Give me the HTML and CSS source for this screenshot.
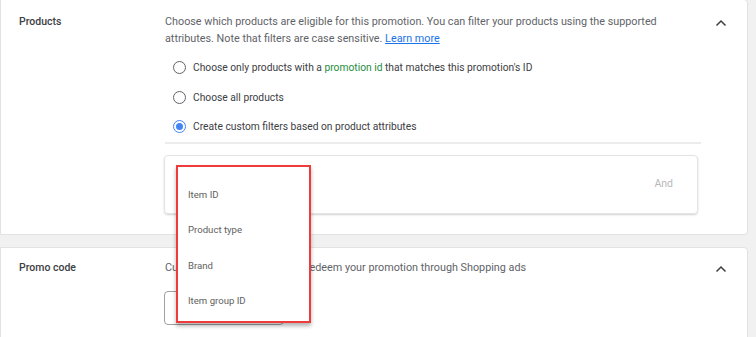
FILE: index.html
```html
<!DOCTYPE html>
<html>
<head>
<meta charset="utf-8">
<link rel="stylesheet" href="styles.css">
</head>
<body>
<div class="page">
  <section class="card card-products">
    <div class="label">Products</div>
    <div class="content">
      <p class="desc">Choose which products are eligible for this promotion. You can filter your products using the supported attributes. Note that filters are case sensitive. <a class="link" href="#">Learn more</a></p>
      <div class="radios">
        <div class="radio-row"><span class="radio"></span><span class="radio-text">Choose only products with a <span class="green">promotion id</span> that matches this promotion's ID</span></div>
        <div class="radio-row"><span class="radio"></span><span class="radio-text">Choose all products</span></div>
        <div class="radio-row"><span class="radio checked"></span><span class="radio-text">Create custom filters based on product attributes</span></div>
      </div>
      <div class="divider"></div>
      <div class="filter-box">
        <span class="and">And</span>
      </div>
    </div>
    <div class="chev">
      <svg width="14" height="14" viewBox="0 0 14 14"><path d="M2.5 9.5 L7 5 L11.5 9.5" fill="none" stroke="#3c4043" stroke-width="1.5"/></svg>
    </div>
  </section>
  <section class="card card-promo">
    <div class="label">Promo code</div>
    <div class="content">
      <p class="desc">Customers will use a code to redeem your promotion through Shopping ads</p>
      <div class="input-box"></div>
    </div>
    <div class="chev">
      <svg width="14" height="14" viewBox="0 0 14 14"><path d="M2.5 9.5 L7 5 L11.5 9.5" fill="none" stroke="#3c4043" stroke-width="1.5"/></svg>
    </div>
  </section>
  <div class="menu">
    <div class="menu-item">Item ID</div>
    <div class="menu-item">Product type</div>
    <div class="menu-item">Brand</div>
    <div class="menu-item">Item group ID</div>
  </div>
</div>
</body>
</html>
```
FILE: styles.css
```css
html, body {
  margin: 0;
  padding: 0;
}
body {
  background: #f1f1f1;
  font-family: Roboto, "Liberation Sans", Arial, sans-serif;
  width: 756px;
  height: 337px;
  overflow: hidden;
}
.page {
  position: relative;
  display: flex;
  flex-direction: column;
  gap: 12px;
  width: 748px;
  margin-top: -1px;
}
.card {
  background: #fff;
  border: 1px solid #e2e2e2;
  border-radius: 0 4px 4px 0;
  display: grid;
  grid-template-columns: 164px 536px 1fr;
}
.card-products {
  padding: 13px 0 22px;
  height: 199px;
}
.card-promo {
  padding: 11px 0 20px;
  height: 120px;
}
.label {
  padding-left: 18px;
  font-size: 10.5px;
  font-weight: 500;
  color: #3c4043;
  line-height: 17px;
}
.content {
  display: flex;
  flex-direction: column;
}
.desc {
  margin: 0;
  font-size: 10.8px;
  line-height: 17px;
  color: #5f6368;
}
.link {
  color: #1a73e8;
  text-decoration: underline;
}
.green {
  color: #1e8e3e;
}
.radios {
  display: flex;
  flex-direction: column;
  margin-top: 6px;
}
.radio-row {
  height: 29.5px;
  display: flex;
  align-items: center;
  gap: 7px;
  padding-left: 8px;
}
.radio {
  width: 11px;
  height: 11px;
  border: 1.6px solid #5f6368;
  border-radius: 50%;
  display: flex;
  align-items: center;
  justify-content: center;
  flex: none;
}
.radio.checked {
  border-color: #4285f4;
}
.radio.checked::after {
  content: "";
  width: 7px;
  height: 7px;
  border-radius: 50%;
  background: #4285f4;
}
.radio-text {
  font-size: 10.25px;
  color: #3c4043;
}
.divider {
  height: 2px;
  background: #ececec;
}
.filter-box {
  margin-top: 11px;
  width: 534px;
  margin-left: -1px;
  height: 59px;
  border: 1px solid #e3e3e3;
  border-radius: 4px;
  box-shadow: 0 1px 2px rgba(0,0,0,0.18);
  display: flex;
  align-items: center;
  justify-content: flex-end;
  padding-right: 24px;
  box-sizing: border-box;
}
.and {
  font-size: 10.5px;
  color: #b8b8b8;
  margin-top: -2px;
}
.chev {
  padding-left: 13px;
  padding-top: 2px;
}
.input-box {
  margin-top: 15px;
  width: 118px;
  height: 32px;
  border: 1px solid #a0a0a0;
  border-radius: 4px;
  margin-left: -1px;
}
.menu {
  position: absolute;
  left: 176px;
  top: 166px;
  width: 135px;
  height: 158px;
  box-sizing: border-box;
  background: #fff;
  border: 2px solid #ee3b3b;
  box-shadow: 0 3px 4px rgba(0,0,0,0.3);
  padding-top: 10px;
  display: flex;
  flex-direction: column;
}
.menu-item {
  height: 35.3px;
  display: flex;
  align-items: center;
  padding-left: 10px;
  font-size: 9.6px;
  color: #616161;
}
```
